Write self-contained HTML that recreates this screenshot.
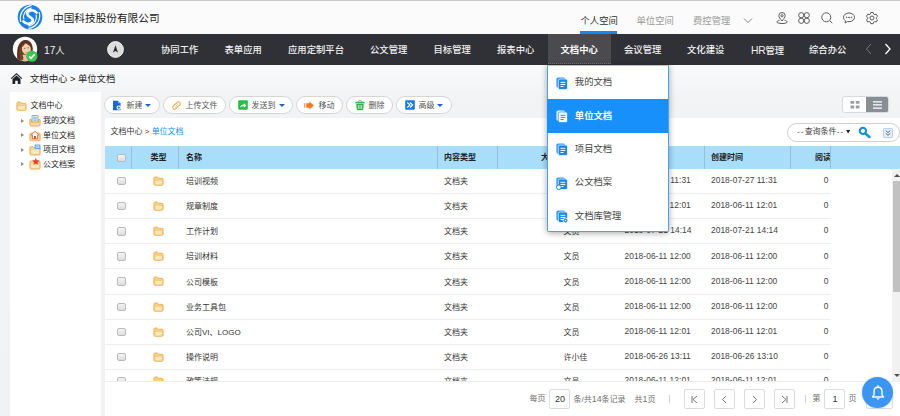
<!DOCTYPE html>
<html lang="zh-CN">
<head>
<meta charset="utf-8">
<title>文档中心</title>
<style>
*{box-sizing:border-box;margin:0;padding:0}
html,body{width:900px;height:416px;overflow:hidden;background:#f2f3f5}
body{background:linear-gradient(#f9fafb 65px,#f2f3f5 100px,#f1f2f4 416px)}
body{position:relative;font-family:"Liberation Sans","Noto Sans CJK SC",sans-serif;font-size:8px;color:#333;line-height:1}
.abs{position:absolute}
.t{position:absolute;white-space:nowrap;transform:translateY(-50%)}
/* top bar */
#top{left:0;top:0;width:900px;height:33.700px;background:#fbfbfb;border-top:1px solid #c9c9c9}
#top .co{left:53px;top:17px;font-size:10.67px;color:#222}
#top .tab{top:20.800px;font-size:9.33px;color:#9a9a9a}
#top .tab.on{color:#333}
#top .ul{left:580px;top:29.800px;width:37px;height:3.200px;background:#1188f5}
/* nav */
#nav{left:0;top:33.700px;width:900px;height:31.200px;background:#303136}
#nav .m{top:17.100px;font-size:9.33px;color:#f2f2f2;font-weight:500}
#nav .act{left:548px;top:0;width:63px;height:30.600px;background:#4a4a4f;border-bottom:1px dotted #77777c}
/* breadcrumb */
#bc{left:30px;top:79.500px;font-size:9.33px;color:#222}
/* sidebar */
#side{left:10px;top:92px;width:90.5px;height:330px;background:#fff}
#side .n{font-size:8px;color:#222}
/* main */
#main{left:104.5px;top:118px;width:796px;height:300px;background:#fff}
.btn{position:absolute;top:96.200px;height:17.500px;border:1px solid #d6d6d6;border-radius:9px;background:#fff}
.btn span{position:absolute;top:9.200px;transform:translateY(-50%);font-size:8px;color:#555;white-space:nowrap}
#thead{left:104.5px;top:145.5px;width:796px;height:23.5px;background:#a9defb}
#thead .h{top:12px;font-size:8px;color:#222;font-weight:700}
#thead .sep{position:absolute;top:0;width:1px;height:23.5px;background:#97bdd9}
.row{position:absolute;left:104.5px;width:726px;height:25.150px;border-bottom:1px solid #eee}
.row .t{top:13.200px;font-size:8px;color:#333}
.cb{position:absolute;width:8.500px;height:8.500px;border:1px solid #b9b9b9;border-radius:2px;background:linear-gradient(#f4f4f4,#dedede)}
/* dropdown */
#dd{left:547.300px;top:64.900px;width:121.700px;height:167.500px;background:#fff;border:1.500px solid #4aa3ef;border-top:1px solid #9ccdf6;border-radius:0 0 2px 2px;box-shadow:0 1px 6px rgba(0,0,0,.35)}
#dd .it{position:absolute;left:0;width:118.700px;height:33.300px}
#dd .it .t{left:26.5px;top:17.300px;font-size:9.33px;color:#444}
#dd .it svg{position:absolute;left:8px;top:10.600px}
#dd .it.sel{background:#1890fb;box-shadow:-1px 0 0 #1890fb,1px 0 0 #1890fb}
#dd .it.sel .t{color:#fff;font-weight:700}
/* footer */
#foot{left:104.5px;top:381.300px;width:796px;height:35px;background:#fff;border-top:1px solid #ededed}
#foot .t{top:16.500px;font-size:8px;color:#707070}
.pb{position:absolute;top:6.400px;width:21px;height:20.5px;border:1px solid #dcdcdc;border-radius:2px;background:#fff}

.ar{position:absolute;left:11px;width:0;height:0;border-left:3px solid #8a8a8a;border-top:2.300px solid transparent;border-bottom:2.300px solid transparent}
.cr{position:absolute;top:6.900px;width:0;height:0;border-top:3.200px solid #1565c0;border-left:3px solid transparent;border-right:3px solid transparent}
.fd{position:absolute;left:48px;top:7px;width:11px;height:10px}
.row .d{font-size:8.400px;letter-spacing:.05px;top:11.300px;color:#444}
.vb{position:absolute;top:12.500px;width:1px;height:8px;background:#d2d2d2}
</style>
</head>
<body>
<svg width="0" height="0" style="position:absolute">
<defs>
<g id="fold"><path d="M.9 2.400c0-.8.600-1.400 1.300-1.400h1.600c.5 0 .8.200 1.100.6l.5.700h3.500c.7 0 1.200.5 1.200 1.200v4.600c0 .7-.5 1.200-1.200 1.200H2.100c-.7 0-1.200-.5-1.200-1.200z" fill="#fbcf85" stroke="#f1a53e" stroke-width=".8"/><path d="M2.300 5h6.500v3c0 .3-.2.500-.5.500H2.800c-.3 0-.5-.2-.5-.5z" fill="#fee9bd"/></g>
<g id="doc"><rect x=".4" y=".4" width="8.800" height="10.400" rx="1.700" fill="#2e97f8"/><rect x="2.300" y="2" width="9.200" height="10.600" rx="1.700" fill="#1587f3" stroke="#fff" stroke-width=".7"/><path d="M4.500 5.300h4.800M4.500 7.400h4.800M4.500 9.500h3" stroke="#fff" stroke-width="1"/></g>
<g id="docw"><rect x=".4" y=".4" width="8.800" height="10.400" rx="1.700" fill="#e6f2ff"/><rect x="2.300" y="2" width="9.200" height="10.600" rx="1.700" fill="#fff" stroke="#1890fb" stroke-width=".7"/><path d="M4.500 5.300h4.800M4.500 7.400h4.800M4.500 9.500h3" stroke="#1890fb" stroke-width="1"/></g>
</defs></svg>
<!-- TOP BAR -->
<div id="top" class="abs">
  <svg class="abs" style="left:17.400px;top:3.200px" width="26" height="26" viewBox="0 0 26 26">
    <circle cx="13" cy="13" r="12.300" fill="#1b80ea"/>
    <g fill="none" stroke="#fff" stroke-linecap="round">
      <path d="M19.500 8.500C16.500 4.800 10 6 10.200 9.800c.2 3.400 5.400 3.200 5.600 6.400.2 3.800-6.300 5-9.300 1.300" stroke-width="2.700"/>
      <path d="M6.800 15C5.500 10.500 8.500 5.200 14.500 4" stroke-width="1.200"/>
      <path d="M3.800 17.500C1.800 11 6 3 14 1.600" stroke-width="1.200"/>
      <path d="M19.200 11c1.300 4.500-1.700 9.800-7.700 11" stroke-width="1.200"/>
      <path d="M22.200 8.500c2 6.500-2.200 14.500-10.200 15.900" stroke-width="1.200"/>
    </g>
  </svg>
  <div class="t co">中国科技股份有限公司</div>
  <div class="t tab on" style="left:580.5px">个人空间</div>
  <div class="t tab" style="left:636.5px">单位空间</div>
  <div class="t tab" style="left:693px">费控管理</div>
  <div class="abs ul"></div>
  <svg class="abs" style="left:742px;top:15px" width="12" height="10" viewBox="0 0 12 10"><path d="M2 2.500l4 4 4-4" fill="none" stroke="#888" stroke-width="1"/></svg>
  <!-- right icons -->
  <svg class="abs" style="left:775px;top:10px" width="14" height="14" viewBox="0 0 14 14" fill="none" stroke="#5c5c5c" stroke-width="1">
    <path d="M7 10C5 7.500 3.800 6.200 3.800 4.700a3.200 3.200 0 016.400 0C10.200 6.200 9 7.500 7 10z"/><circle cx="7" cy="4.700" r="1.100"/><path d="M4.500 9.300C2.500 9.800 1.800 10.500 1.800 11c0 .9 2.300 1.500 5.200 1.500s5.200-.6 5.200-1.500c0-.5-.7-1.200-2.700-1.700"/>
  </svg>
  <svg class="abs" style="left:797px;top:10px" width="14" height="14" viewBox="0 0 14 14" fill="none" stroke="#5c5c5c" stroke-width="1">
    <circle cx="4.200" cy="4.200" r="2.600"/><circle cx="9.800" cy="4.200" r="2.600"/><circle cx="4.200" cy="9.800" r="2.600"/><circle cx="9.800" cy="9.800" r="2.600"/>
  </svg>
  <svg class="abs" style="left:820px;top:10px" width="14" height="14" viewBox="0 0 14 14" fill="none" stroke="#5c5c5c" stroke-width="1">
    <circle cx="6.300" cy="6.300" r="4.500"/><path d="M9.600 9.600l2.700 2.700"/>
  </svg>
  <svg class="abs" style="left:842px;top:10px" width="14" height="14" viewBox="0 0 14 14" fill="none" stroke="#5c5c5c" stroke-width="1">
    <path d="M7 2C3.700 2 1.500 4 1.500 6.300c0 1.500.8 2.700 2 3.500L3 12l2.500-1.500c.5.100 1 .2 1.500.2 3.300 0 5.500-2 5.500-4.400S10.300 2 7 2z"/><circle cx="4.700" cy="6.300" r=".4" fill="#5c5c5c"/><circle cx="7" cy="6.300" r=".4" fill="#5c5c5c"/><circle cx="9.300" cy="6.300" r=".4" fill="#5c5c5c"/>
  </svg>
  <svg class="abs" style="left:865px;top:10px" width="14" height="14" viewBox="0 0 14 14" fill="none" stroke="#5c5c5c" stroke-width="1">
    <circle cx="7" cy="7" r="2"/><path d="M5.800 1.500h2.400l.4 1.500 1.200.7 1.500-.5 1.200 2.100-1.100 1.100v1.400l1.100 1.100-1.200 2.100-1.500-.5-1.200.7-.4 1.500H5.800l-.4-1.500-1.200-.7-1.500.5-1.200-2.100 1.100-1.100V6.400L1.500 5.300l1.200-2.100 1.500.5 1.200-.7z"/>
  </svg>
</div>

<!-- NAV BAR -->
<div id="nav" class="abs">
  <div class="abs act"></div>
  <!-- avatar -->
  <svg class="abs" style="left:12px;top:2.800px" width="28" height="28" viewBox="0 0 28 28">
    <defs><clipPath id="avc"><circle cx="13" cy="13" r="12.200"/></clipPath></defs>
    <circle cx="13" cy="13" r="12.200" fill="#fdfdfd"/>
    <g clip-path="url(#avc)">
      <path d="M5.500 25C4.500 16 5 6.500 11.500 4.300c6.500-2 9.500 4 9.300 9.700-.1 3.500-.8 6-1.800 8-1 2-4 4-7 4s-5-.3-6.500-1z" fill="#5b3220"/>
      <path d="M10.300 18.500l1.200 3.500c-1.500 1-2.500 2-3 4h11c-.5-2-1.500-3-3.500-3.800l-.4-3.200z" fill="#eec19e"/>
      <ellipse cx="14.300" cy="13" rx="4.500" ry="5.700" fill="#f6d0ae" transform="rotate(-10 14.300 13)"/>
      <path d="M8.800 11.500C10 6.500 16.500 5 19.500 10c-2.500-.3-4.500-1.500-6-3.300-1 2.300-2.700 3.800-4.700 4.800z" fill="#6a3b24"/>
      <path d="M8 12c-.8 4-.5 9 .5 13l3-1.500c-1.800-3.500-2.500-7.500-2-11z" fill="#7a4529"/>
      <path d="M11.800 12.300h1.600M15.500 11.800h1.600" stroke="#4a2a1c" stroke-width=".6"/>
      <path d="M13 16.300c.8.600 2 .5 2.800-.2" stroke="#c9715a" stroke-width=".6" fill="none"/>
    </g>
    <circle cx="19.800" cy="20.200" r="5.600" fill="#3cc551"/>
    <path d="M17 20.300l2 2 3.700-4" fill="none" stroke="#fff" stroke-width="1.500"/>
  </svg>
  <div class="t m" style="left:44px;font-weight:400"><span style="font-size:10.200px">17</span>人</div>
  <svg class="abs" style="left:107px;top:7.600px" width="17" height="17" viewBox="0 0 17 17">
    <circle cx="8.500" cy="8.500" r="7.900" fill="#dcdcdc" stroke="#fafafa" stroke-width=".9"/>
    <path d="M8.500 4.200l2.500 7.300-2.500-1.600L6 11.500z" fill="#2a2b30"/>
  </svg>
  <div class="t m" style="left:161px">协同工作</div>
  <div class="t m" style="left:224.500px">表单应用</div>
  <div class="t m" style="left:288px">应用定制平台</div>
  <div class="t m" style="left:370px">公文管理</div>
  <div class="t m" style="left:433.500px">目标管理</div>
  <div class="t m" style="left:497px">报表中心</div>
  <div class="t m" style="left:560.500px;color:#fff;font-weight:700">文档中心</div>
  <div class="t m" style="left:624px">会议管理</div>
  <div class="t m" style="left:687px">文化建设</div>
  <div class="t m" style="left:751px"><span style="font-size:10.300px;letter-spacing:-.2px">HR</span>管理</div>
  <div class="t m" style="left:809px">综合办公</div>
  <svg class="abs" style="left:863px;top:8.300px" width="12" height="14" viewBox="0 0 12 14"><path d="M8 2L3.500 7 8 12" fill="none" stroke="#777" stroke-width="1"/></svg>
  <svg class="abs" style="left:882px;top:8.300px" width="12" height="14" viewBox="0 0 12 14"><path d="M3.500 2L8 7l-4.500 5" fill="none" stroke="#fff" stroke-width="1.300"/></svg>
</div>

<!-- BREADCRUMB -->
<svg class="abs" style="left:10px;top:72.300px" width="13" height="13" viewBox="0 0 13 13">
  <path d="M6.500 1L.8 6.200l.8.800L6.500 2.600 11.400 7l.8-.8z" fill="#222"/>
  <path d="M2.500 7l4-3.600 4 3.600v5H7.800V8.800H5.200V12H2.500z" fill="#222"/>
</svg>
<div id="bc" class="t">文档中心 &gt; 单位文档</div>

<!-- SIDEBAR -->
<div id="side" class="abs">
  <svg class="abs" style="left:6px;top:8.800px" width="11" height="10" viewBox="0 0 11 10"><use href="#fold"/></svg>
  <div class="t n" style="left:20.500px;top:14px">文档中心</div>
  <i class="ar" style="top:26.700px"></i>
  <svg class="abs" style="left:18.600px;top:23.300px" width="12" height="11.500" viewBox="0 0 12 11.500"><rect x="3" y=".5" width="6" height="7.500" rx=".6" fill="#dcecfb" stroke="#4e9be0" stroke-width=".7"/><path d="M4.300 2.300h3.400M4.300 3.800h3.400M4.300 5.300h3.400" stroke="#4e9be0" stroke-width=".6"/><path d="M.9 4.500h1.600v2.600h7V4.500h1.600v5.300c0 .7-.5 1.200-1.200 1.200H2.100c-.7 0-1.200-.5-1.200-1.200z" fill="#fcd9a0" stroke="#ea9a3a" stroke-width=".8"/></svg>
  <div class="t n" style="left:33px;top:29px">我的文档</div>
  <i class="ar" style="top:41.200px"></i>
  <svg class="abs" style="left:18.600px;top:37.700px" width="12" height="11.500" viewBox="0 0 12 11.500"><path d="M.9 4.200c0-.7.500-1.200 1.200-1.200h7.800c.7 0 1.200.5 1.200 1.200v5.600c0 .7-.5 1.200-1.200 1.200H2.100c-.7 0-1.200-.5-1.200-1.200z" fill="#fcd9a0" stroke="#ea9a3a" stroke-width=".8"/><path d="M6 1.300L2.200 4.900h1.100v3.900h5.400V4.900h1.100z" fill="#fff" stroke="#b8562e" stroke-width=".8" stroke-linejoin="round"/><rect x="5.100" y="6" width="1.800" height="2.800" fill="#b8562e"/></svg>
  <div class="t n" style="left:33px;top:43.500px">单位文档</div>
  <i class="ar" style="top:55.700px"></i>
  <svg class="abs" style="left:18.600px;top:52px" width="12" height="11.500" viewBox="0 0 12 11.500"><path d="M.9 3.800c0-.7.500-1.200 1.200-1.200h1.700l1 1.100h5.100c.7 0 1.200.5 1.200 1.200v4.900c0 .7-.5 1.200-1.200 1.200H2.100c-.7 0-1.200-.5-1.200-1.200z" fill="#fcd9a0" stroke="#ea9a3a" stroke-width=".8"/><path d="M2.300 6.500h7.400v2.800c0 .3-.2.500-.5.500H2.800c-.3 0-.5-.2-.5-.5z" fill="#fee9c4"/><rect x="5.600" y=".4" width="5.800" height="4.600" rx=".5" fill="#5b9fe6"/><path d="M6.300 2h4.400M6.300 3.400h4.400M7.800 1v3.500M9.300 1v3.500" stroke="#fff" stroke-width=".45"/></svg>
  <div class="t n" style="left:33px;top:58px">项目文档</div>
  <i class="ar" style="top:70.200px"></i>
  <svg class="abs" style="left:18.600px;top:66.300px" width="12" height="11.500" viewBox="0 0 12 11.500"><path d="M.9 4.200c0-.7.500-1.200 1.200-1.200h7.800c.7 0 1.200.5 1.200 1.200v5.600c0 .7-.5 1.200-1.200 1.200H2.100c-.7 0-1.200-.5-1.200-1.200z" fill="#fcd9a0" stroke="#ea9a3a" stroke-width=".8"/><path d="M2.300 6.800h7.400v2.500c0 .3-.2.500-.5.500H2.800c-.3 0-.5-.2-.5-.5z" fill="#fee9c4"/><path d="M6.800 0l1.100 2.300 2.600.3-1.900 1.700.5 2.500-2.300-1.300-2.300 1.300.5-2.500-1.900-1.700 2.600-.3z" fill="#e2402a"/></svg>
  <div class="t n" style="left:33px;top:72.500px">公文档案</div>
</div>

<!-- MAIN -->
<div id="main" class="abs"></div>
<!-- TOOLBAR -->
<div class="btn" style="left:104.1px;width:56.0px">
  <svg class="abs" style="left:7.200px;top:3px" width="10" height="11" viewBox="0 0 10 11"><path d="M1 .8h5l2.500 2.500v6.900H1z" fill="#1a63d8"/><path d="M6 .8v2.500h2.500" fill="#8fb8f2"/><circle cx="6.800" cy="7.600" r="2.200" fill="#fff"/><path d="M6.800 6.300v2.600M5.500 7.600h2.600" stroke="#1a63d8" stroke-width=".8"/></svg>
  <span style="left:21.500px">新建</span><i class="cr" style="left:40px"></i></div>
<div class="btn" style="left:163.1px;width:62.5px">
  <svg class="abs" style="left:7.200px;top:3px" width="11" height="11" viewBox="0 0 11 11"><rect x="1" y="3.700" width="9" height="3.600" rx="1.800" fill="none" stroke="#f0a23c" stroke-width="1" transform="rotate(-42 5.500 5.500)"/><path d="M4.300 6.700l2.600-2.400" stroke="#f0a23c" stroke-width=".7"/></svg>
  <span style="left:21.500px">上传文件</span></div>
<div class="btn" style="left:229.1px;width:63.5px">
  <svg class="abs" style="left:7.700px;top:3px" width="10" height="10" viewBox="0 0 10 10"><rect x=".2" y=".2" width="9.600" height="9.600" rx="1" fill="#2dbb48"/><path d="M2 7.500c.5-2 2-3 3.800-3V3l2.400 2.400-2.400 2.400V6.300C4.300 6.200 3 6.500 2 7.500z" fill="#fff"/></svg>
  <span style="left:21.500px">发送到</span><i class="cr" style="left:49px"></i></div>
<div class="btn" style="left:296.1px;width:46.5px">
  <svg class="abs" style="left:7.200px;top:3.700px" width="11" height="9" viewBox="0 0 11 9"><rect x=".3" y="2.300" width="1" height="4.400" fill="#f47a20"/><path d="M2.300 2.300h3V.4L10 4.500 5.300 8.600V6.700h-3z" fill="#f47a20"/></svg>
  <span style="left:21.500px">移动</span></div>
<div class="btn" style="left:346.1px;width:46.5px">
  <svg class="abs" style="left:7.700px;top:3px" width="10" height="11" viewBox="0 0 10 11"><path d="M3.300 1.800c0-.8.700-1.300 1.700-1.300s1.700.5 1.700 1.300" fill="none" stroke="#36b34a" stroke-width=".8"/><rect x=".4" y="1.800" width="9.200" height="1.600" rx=".4" fill="#36b34a"/><path d="M1.200 4h7.600l-.6 5.600c0 .4-.4.700-.8.700H2.600c-.4 0-.8-.3-.8-.7z" fill="#36b34a"/><path d="M3.500 5v4M5 5v4M6.500 5v4" stroke="#fff" stroke-width=".6"/></svg>
  <span style="left:21.500px">删除</span></div>
<div class="btn" style="left:396.1px;width:56.0px">
  <svg class="abs" style="left:7.700px;top:3px" width="10" height="10" viewBox="0 0 10 10"><rect x=".2" y=".2" width="9.600" height="9.600" rx=".8" fill="#1a78e6"/><path d="M2.300 2.500L5 5 2.300 7.500M5 2.500L7.700 5 5 7.500" fill="none" stroke="#fff" stroke-width="1.100"/></svg>
  <span style="left:21.500px">高级</span><i class="cr" style="left:40px"></i></div>
<!-- view toggle -->
<div class="abs" style="left:842.300px;top:96.200px;width:46.400px;height:16.600px;border:1px solid #d6dade;border-radius:2.500px;background:#fff;overflow:hidden">
  <svg class="abs" style="left:6.700px;top:3.800px" width="10" height="8" viewBox="0 0 10 8"><path d="M.5 0h3.700v2.800H.5zM5.800 0h3.700v2.800H5.800zM.5 4.600h3.700v2.800H.5zM5.800 4.600h3.700v2.800H5.800z" fill="#9a9ea5"/></svg>
  <div class="abs" style="left:22.700px;top:-1px;width:24px;height:17px;background:#898d94"></div>
  <svg class="abs" style="left:29.300px;top:3.700px" width="9.400" height="8" viewBox="0 0 9.400 8"><path d="M0 .2h9.400v1.300H0zM0 3.300h9.400v1.300H0zM0 6.400h9.400v1.300H0z" fill="#fff"/></svg>
</div>
<!-- search pill -->
<div class="abs" style="left:786.800px;top:122.500px;width:113.200px;height:19.200px;border:1px solid #cfcfcf;border-radius:9.600px;background:#fff">
  <div class="t" style="left:9.300px;top:8.800px;font-size:8px;color:#444"><span style="letter-spacing:1.100px">--</span>查询条件<span style="letter-spacing:1.100px">--</span></div>
  <svg class="abs" style="left:57.800px;top:6.800px" width="4.200" height="3.600" viewBox="0 0 5 4"><path d="M0 0h5L2.500 4z" fill="#222"/></svg>
  <svg class="abs" style="left:70.300px;top:2px" width="13" height="13" viewBox="0 0 13 13"><circle cx="4.900" cy="4.900" r="3.100" fill="#fff" stroke="#1192cd" stroke-width="2.100"/><path d="M7.600 7.600l3.800 3.400" stroke="#1192cd" stroke-width="2.500" stroke-linecap="round"/></svg>
  <svg class="abs" style="left:95px;top:4.500px" width="10" height="10" viewBox="0 0 11 11"><rect x=".5" y=".5" width="10" height="10" rx="1.500" fill="#e4f1fc" stroke="#9cc7ec" stroke-width=".9"/><path d="M3 2.800l2.500 2.200L8 2.800M3 5.800l2.500 2.200L8 5.800" fill="none" stroke="#444" stroke-width=".9"/></svg>
</div>
<!-- inner breadcrumb -->
<div class="t" style="left:110.500px;top:131.500px;font-size:8px;color:#333">文档中心 &gt; <span style="color:#1a8cf0">单位文档</span></div>
<div id="thead" class="abs">
  <i class="cb" style="left:12.500px;top:8px"></i>
  <i class="sep" style="left:26.600px"></i><div class="t h" style="left:46px">类型</div>
  <i class="sep" style="left:73.500px"></i><div class="t h" style="left:81.500px">名称</div>
  <i class="sep" style="left:332.500px"></i><div class="t h" style="left:339.500px">内容类型</div>
  <i class="sep" style="left:392.500px"></i><div class="t h" style="left:436.500px">大小</div>
  <i class="sep" style="left:452.500px"></i><div class="t h" style="left:459px">创建人</div>
  <i class="sep" style="left:513.500px"></i><div class="t h" style="left:520px">修改时间</div>
  <i class="sep" style="left:599.200px"></i><div class="t h" style="left:606.500px">创建时间</div>
  <i class="sep" style="left:685.500px"></i><div class="t h" style="left:710.500px">阅读</div>
  <i class="sep" style="left:725.500px"></i>
</div>
<div id="rows">
<div class="row" style="top:168.80px"><i class="cb" style="left:12.500px;top:8px"></i><svg class="fd" viewBox="0 0 11 10"><use href="#fold"/></svg><div class="t" style="left:81.500px">培训视频</div><div class="t" style="left:339.500px">文档夹</div><div class="t" style="left:459px">文员</div><div class="t d" style="left:520px">2018-07-27 11:31</div><div class="t d" style="left:606.500px">2018-07-27 11:31</div><div class="t d" style="right:2px">0</div></div>
<div class="row" style="top:193.95px"><i class="cb" style="left:12.500px;top:8px"></i><svg class="fd" viewBox="0 0 11 10"><use href="#fold"/></svg><div class="t" style="left:81.500px">规章制度</div><div class="t" style="left:339.500px">文档夹</div><div class="t" style="left:459px">文员</div><div class="t d" style="left:520px">2018-06-11 12:01</div><div class="t d" style="left:606.500px">2018-06-11 12:01</div><div class="t d" style="right:2px">0</div></div>
<div class="row" style="top:219.10px"><i class="cb" style="left:12.500px;top:8px"></i><svg class="fd" viewBox="0 0 11 10"><use href="#fold"/></svg><div class="t" style="left:81.500px">工作计划</div><div class="t" style="left:339.500px">文档夹</div><div class="t" style="left:459px">文员</div><div class="t d" style="left:520px">2018-07-21 14:14</div><div class="t d" style="left:606.500px">2018-07-21 14:14</div><div class="t d" style="right:2px">0</div></div>
<div class="row" style="top:244.25px"><i class="cb" style="left:12.500px;top:8px"></i><svg class="fd" viewBox="0 0 11 10"><use href="#fold"/></svg><div class="t" style="left:81.500px">培训材料</div><div class="t" style="left:339.500px">文档夹</div><div class="t" style="left:459px">文员</div><div class="t d" style="left:520px">2018-06-11 12:00</div><div class="t d" style="left:606.500px">2018-06-11 12:00</div><div class="t d" style="right:2px">0</div></div>
<div class="row" style="top:269.40px"><i class="cb" style="left:12.500px;top:8px"></i><svg class="fd" viewBox="0 0 11 10"><use href="#fold"/></svg><div class="t" style="left:81.500px">公司模板</div><div class="t" style="left:339.500px">文档夹</div><div class="t" style="left:459px">文员</div><div class="t d" style="left:520px">2018-06-11 12:00</div><div class="t d" style="left:606.500px">2018-06-11 12:00</div><div class="t d" style="right:2px">0</div></div>
<div class="row" style="top:294.55px"><i class="cb" style="left:12.500px;top:8px"></i><svg class="fd" viewBox="0 0 11 10"><use href="#fold"/></svg><div class="t" style="left:81.500px">业务工具包</div><div class="t" style="left:339.500px">文档夹</div><div class="t" style="left:459px">文员</div><div class="t d" style="left:520px">2018-06-11 12:00</div><div class="t d" style="left:606.500px">2018-06-11 12:00</div><div class="t d" style="right:2px">0</div></div>
<div class="row" style="top:319.70px"><i class="cb" style="left:12.500px;top:8px"></i><svg class="fd" viewBox="0 0 11 10"><use href="#fold"/></svg><div class="t" style="left:81.500px">公司VI、LOGO</div><div class="t" style="left:339.500px">文档夹</div><div class="t" style="left:459px">文员</div><div class="t d" style="left:520px">2018-06-11 12:01</div><div class="t d" style="left:606.500px">2018-06-11 12:01</div><div class="t d" style="right:2px">0</div></div>
<div class="row" style="top:344.85px"><i class="cb" style="left:12.500px;top:8px"></i><svg class="fd" viewBox="0 0 11 10"><use href="#fold"/></svg><div class="t" style="left:81.500px">操作说明</div><div class="t" style="left:339.500px">文档夹</div><div class="t" style="left:459px">许小佳</div><div class="t d" style="left:520px">2018-06-26 13:11</div><div class="t d" style="left:606.500px">2018-06-26 13:10</div><div class="t d" style="right:2px">0</div></div>
<div class="row" style="top:370.00px;margin-top:-1.5px"><i class="cb" style="left:12.500px;top:8px"></i><svg class="fd" viewBox="0 0 11 10"><use href="#fold"/></svg><div class="t" style="left:81.500px">政策法规</div><div class="t" style="left:339.500px">文档夹</div><div class="t" style="left:459px">文员</div><div class="t d" style="left:520px">2018-06-11 12:01</div><div class="t d" style="left:606.500px">2018-06-11 12:01</div><div class="t d" style="right:2px">0</div></div>
</div><!--/rows-->
<div id="foot" class="abs">
  <div class="t" style="left:425px">每页</div>
  <div class="pb" style="left:444.500px"><div class="t" style="left:5px;top:9.500px;font-size:9px;color:#333">20</div></div>
  <div class="t" style="left:469px">条/共<span style="font-size:8.800px">14</span>条记录</div>
  <div class="t" style="left:530px">共<span style="font-size:8.800px">1</span>页</div>
  <i class="vb" style="left:564.500px"></i>
  <div class="pb" style="left:579.500px"><svg class="abs" style="left:5px;top:5px" width="9" height="9" viewBox="0 0 9 9"><path d="M2 1v7M7 1L3 4.500 7 8" fill="none" stroke="#666" stroke-width=".9"/></svg></div>
  <div class="pb" style="left:609.500px"><svg class="abs" style="left:5px;top:5px" width="9" height="9" viewBox="0 0 9 9"><path d="M6 1L2.500 4.500 6 8" fill="none" stroke="#666" stroke-width=".9"/></svg></div>
  <div class="pb" style="left:639.500px"><svg class="abs" style="left:5px;top:5px" width="9" height="9" viewBox="0 0 9 9"><path d="M3 1l3.500 3.500L3 8" fill="none" stroke="#666" stroke-width=".9"/></svg></div>
  <div class="pb" style="left:669.500px"><svg class="abs" style="left:5px;top:5px" width="9" height="9" viewBox="0 0 9 9"><path d="M7 1v7M2 1l4 3.500L2 8" fill="none" stroke="#666" stroke-width=".9"/></svg></div>
  <i class="vb" style="left:700.500px"></i>
  <div class="t" style="left:708px">第</div>
  <div class="pb" style="left:719.500px"><div class="t" style="left:7.500px;top:9.500px;font-size:9px;color:#333">1</div></div>
  <div class="t" style="left:744px">页</div>
  <div class="pb" style="left:761px;width:27px"></div>
</div>
<!-- scrollbar -->
<div class="abs" style="left:891.500px;top:169px;width:8.500px;height:212.500px;background:#f1f1f1">
  <svg class="abs" style="left:2.500px;top:5px" width="6" height="3" viewBox="0 0 6 3"><path d="M0 3L3 0l3 3z" fill="#505050"/></svg>
  <div class="abs" style="left:1.300px;top:11.500px;width:7.200px;height:111.500px;background:#c1c1c1"></div>
  <svg class="abs" style="left:2.500px;top:205px" width="6" height="3" viewBox="0 0 6 3"><path d="M0 0h6L3 3z" fill="#505050"/></svg>
</div>
<!-- bell -->
<div class="abs" style="left:862px;top:376.900px;width:31px;height:31px;border-radius:50%;background:rgba(45,141,240,.93);box-shadow:0 0 2px rgba(45,143,240,.35)">
  <svg class="abs" style="left:8.500px;top:7.800px" width="14" height="16" viewBox="0 0 14 16"><path d="M7 2.200c-2.500 0-4 1.900-4 4.300v3.300L1.500 12h11L11 9.800V6.500c0-2.400-1.500-4.300-4-4.300z" fill="none" stroke="#fff" stroke-width="1.400" stroke-linejoin="round"/><path d="M7 .8v1.200" stroke="#fff" stroke-width="1.400" stroke-linecap="round"/><path d="M5.700 13.400h2.600l-1.300 1.400z" fill="#fff" stroke="#fff" stroke-width=".5" stroke-linejoin="round"/></svg>
</div>

<!-- DROPDOWN -->
<div id="dd" class="abs">
  <div class="it" style="top:0.3px"><svg width="12" height="13" viewBox="0 0 12 13"><use href="#doc"/></svg><div class="t">我的文档</div></div>
  <div class="it sel" style="top:33.6px"><svg width="12" height="13" viewBox="0 0 12 13"><use href="#docw"/></svg><div class="t">单位文档</div></div>
  <div class="it" style="top:66.9px"><svg width="12" height="13" viewBox="0 0 12 13"><use href="#doc"/></svg><div class="t">项目文档</div></div>
  <div class="it" style="top:100.3px"><svg width="12" height="13" viewBox="0 0 12 13"><use href="#doc"/><circle cx="2.800" cy="10.300" r="2.300" fill="#fff" stroke="#1a8cf5" stroke-width="1"/></svg><div class="t">公文档案</div></div>
  <div class="it" style="top:133.6px"><svg width="12" height="13" viewBox="0 0 12 13"><use href="#doc"/><circle cx="9.500" cy="10.500" r="2.400" fill="#1a8cf5" stroke="#fff" stroke-width=".8"/><circle cx="9.500" cy="10.500" r=".8" fill="#fff"/></svg><div class="t">文档库管理</div></div>
</div>
</body>
</html>
